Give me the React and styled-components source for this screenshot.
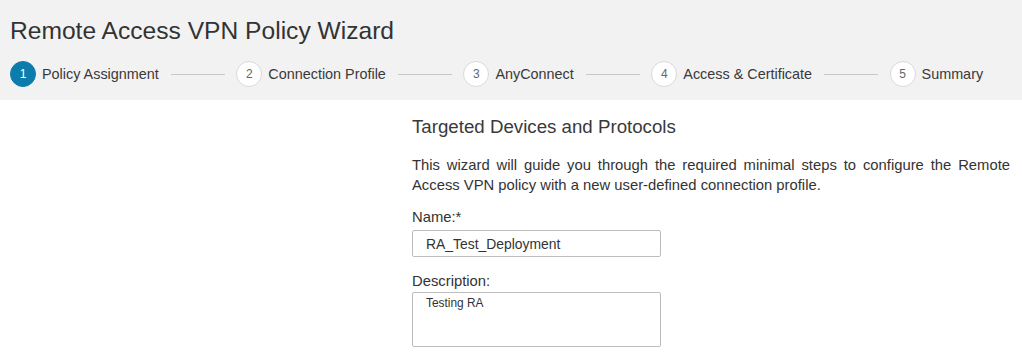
import React from "react";
import styled, { createGlobalStyle } from "styled-components";

const Global = createGlobalStyle`
  html, body { margin: 0; padding: 0; background: #fff; }
  body { font-family: "Liberation Sans", Arial, sans-serif; color: #39393b; }
`;

const Header = styled.header`
  background: #f2f2f2;
  height: 100px;
  padding: 16px 10px 0;
  box-sizing: border-box;
`;

const Title = styled.h1`
  margin: 0;
  font-weight: 400;
  font-size: 24.6px;
  line-height: 30px;
  color: #333;
`;

const Steps = styled.ol`
  list-style: none;
  margin: 15px 0 0;
  padding: 0;
  display: flex;
  align-items: center;
  gap: 11.75px;
`;

const Step = styled.li`
  display: flex;
  align-items: center;
  gap: 6px;
  font-size: 14.4px;
  line-height: 26px;
  color: #39393b;
`;

const Circle = styled.span`
  width: 26px;
  height: 26px;
  border-radius: 50%;
  box-sizing: border-box;
  display: flex;
  align-items: center;
  justify-content: center;
  font-size: 12px;
  background: ${(p) => (p.$active ? "#0b7cab" : "#fff")};
  color: ${(p) => (p.$active ? "#fff" : "#666")};
  border: 1px solid ${(p) => (p.$active ? "#0b7cab" : "#dadada")};
`;

const Connector = styled.li`
  width: 54px;
  height: 1px;
  background: #c8c8c8;
`;

const Main = styled.main`
  padding: 16px 12px 0 412px;
`;

const Section = styled.h2`
  margin: 0;
  font-size: 18.7px;
  font-weight: 400;
  line-height: 22px;
  color: #39393b;
`;

const Intro = styled.p`
  margin: 17px 0 0;
  font-size: 14.8px;
  line-height: 20px;
  text-align: justify;
  color: #333;
`;

const Label = styled.label`
  display: block;
  font-size: 14.8px;
  line-height: 20px;
  color: #333;
  margin-top: ${(p) => p.$top}px;
`;

const Input = styled.div`
  margin-top: 3px;
  width: 249px;
  height: 27px;
  box-sizing: border-box;
  border: 1px solid #bdbdbd;
  border-radius: 2px;
  padding: 0 13px;
  display: flex;
  align-items: center;
  font-size: 13.9px;
  color: #333;
`;

const TextArea = styled.div`
  margin-top: 1px;
  width: 249px;
  height: 55px;
  box-sizing: border-box;
  border: 1px solid #bdbdbd;
  border-radius: 2px;
  padding: 3px 13px;
  font-size: 11.9px;
  line-height: 14px;
  color: #333;
`;

const steps = [
  "Policy Assignment",
  "Connection Profile",
  "AnyConnect",
  "Access & Certificate",
  "Summary",
];

export default function App() {
  return (
    <>
      <Global />
      <Header>
        <Title>Remote Access VPN Policy Wizard</Title>
        <Steps>
          {steps.map((s, i) => (
            <React.Fragment key={s}>
              {i > 0 && <Connector />}
              <Step>
                <Circle $active={i === 0}>{i + 1}</Circle>
                {s}
              </Step>
            </React.Fragment>
          ))}
        </Steps>
      </Header>
      <Main>
        <Section>Targeted Devices and Protocols</Section>
        <Intro>
          This wizard will guide you through the required minimal steps to configure the Remote
          Access VPN policy with a new user-defined connection profile.
        </Intro>
        <Label $top={12}>Name:*</Label>
        <Input>RA_Test_Deployment</Input>
        <Label $top={14}>Description:</Label>
        <TextArea>Testing RA</TextArea>
      </Main>
    </>
  );
}
